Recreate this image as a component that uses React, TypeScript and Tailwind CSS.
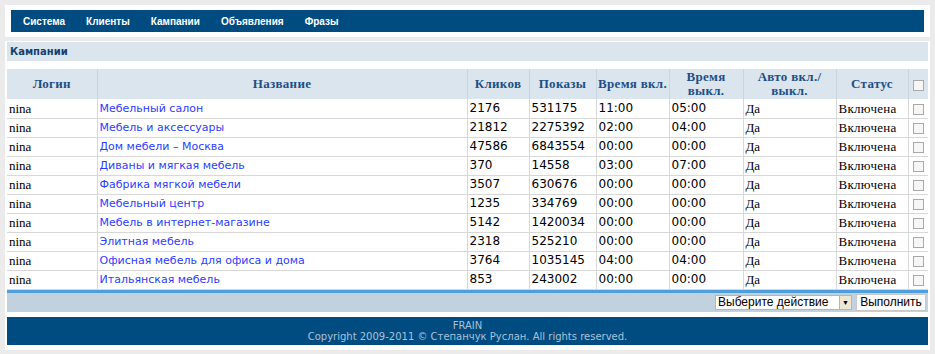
import React from "react";

const rows: [string, string, string, string, string][] = [
  ["Мебельный салон", "2176", "531175", "11:00", "05:00"],
  ["Мебель и аксессуары", "21812", "2275392", "02:00", "04:00"],
  ["Дом мебели – Москва", "47586", "6843554", "00:00", "00:00"],
  ["Диваны и мягкая мебель", "370", "14558", "03:00", "07:00"],
  ["Фабрика мягкой мебели", "3507", "630676", "00:00", "00:00"],
  ["Мебельный центр", "1235", "334769", "00:00", "00:00"],
  ["Мебель в интернет-магазине", "5142", "1420034", "00:00", "00:00"],
  ["Элитная мебель", "2318", "525210", "00:00", "00:00"],
  ["Офисная мебель для офиса и дома", "3764", "1035145", "04:00", "04:00"],
  ["Итальянская мебель", "853", "243002", "00:00", "00:00"],
];

const serif = "font-[family-name:Liberation_Serif,serif]";
const sans = "font-[family-name:DejaVu_Sans,sans-serif]";
const arial = "font-[family-name:Liberation_Sans,sans-serif]";

function Box() {
  return <span className="inline-block w-[11px] h-[11px] border border-[#a9a9a9] bg-[#f6f6f6] align-middle" />;
}

export default function App() {
  const th = `border-l border-[#c9d6e2] text-center font-bold text-[13px] leading-[14px] text-[#1d4f86] tracking-[0.3px] ${serif}`;
  const td = "border-l border-b border-[#d8d8d8] px-[2px] py-0 h-[19px] leading-[17px] whitespace-nowrap overflow-hidden";
  return (
    <div className="w-[935px] h-[354px] bg-[#ebebeb] pt-[5px] px-[5px]">
      <div className="bg-white px-[6px] py-[5px]">
        <div className={`h-[22px] bg-[#004b80] flex items-center gap-[21px] pl-[12px] text-white font-bold text-[10px] ${arial}`}>
          <span>Система</span>
          <span>Клиенты</span>
          <span>Кампании</span>
          <span>Объявления</span>
          <span>Фразы</span>
        </div>
      </div>
      <div className="mt-[4px] bg-white px-[2px] pt-[1px] pb-[5px]">
        <div className={`h-[19px] bg-[#dbe5ee] flex items-center pl-[3px] text-[10px] font-bold text-[#14406e] ${sans}`}>Кампании</div>
        <div className="h-[8px]" />
        <table className="w-full border-collapse table-fixed">
          <colgroup>
            <col className="w-[90px]" />
            <col className="w-[370px]" />
            <col className="w-[62px]" />
            <col className="w-[67px]" />
            <col className="w-[73px]" />
            <col className="w-[74px]" />
            <col className="w-[93px]" />
            <col className="w-[72px]" />
            <col className="w-[20px]" />
          </colgroup>
          <thead>
            <tr className="h-[30px] bg-[#dbe5ee]">
              <th className={`${th} border-l-0`}>Логин</th>
              <th className={th}>Название</th>
              <th className={th}>Кликов</th>
              <th className={th}>Показы</th>
              <th className={th}>Время вкл.</th>
              <th className={th}>Время<br />выкл.</th>
              <th className={th}>Авто вкл./<br />выкл.</th>
              <th className={th}>Статус</th>
              <th className={th}><Box /></th>
            </tr>
          </thead>
          <tbody className="text-[13px] text-black">
            {rows.map((r) => (
              <tr key={r[0]}>
                <td className={`${td} border-l-0 ${serif}`}>nina</td>
                <td className={`${td} text-[11px] text-[#2b3dff] ${sans}`}>{r[0]}</td>
                <td className={`${td} text-[12px] ${sans}`}>{r[1]}</td>
                <td className={`${td} text-[12px] ${sans}`}>{r[2]}</td>
                <td className={`${td} text-[12px] ${sans}`}>{r[3]}</td>
                <td className={`${td} text-[12px] ${sans}`}>{r[4]}</td>
                <td className={`${td} ${serif}`}>Да</td>
                <td className={`${td} tracking-[0.3px] ${serif}`}>Включена</td>
                <td className={`${td} text-center`}><Box /></td>
              </tr>
            ))}
          </tbody>
        </table>
        <div className="h-[3px] bg-[#4d9fdf]" />
        <div className={`h-[19px] bg-[#c2d1de] flex items-center justify-end gap-[4px] pr-[2px] text-[12px] ${arial}`}>
          <div className="w-[137px] h-[15px] bg-white border border-[#b5b5b5] flex items-center justify-between pl-[2px] leading-[13px]">
            <span>Выберите действие</span>
            <span className="w-[12px] h-[13px] bg-[#ece6d4] border-l border-[#b5b5b5] flex items-center justify-center text-[7px]">▼</span>
          </div>
          <div className="w-[70px] h-[17px] bg-[#fafafa] border border-[#c8c8c8] flex items-center justify-center">Выполнить</div>
        </div>
        <div className="h-[5px]" />
        <div className={`h-[28px] bg-[#004b80] flex flex-col items-center justify-center text-[10px] leading-[11px] text-[#a9c1d9] ${sans}`}>
          <span>FRAIN</span>
          <span>Copyright 2009-2011 © Степанчук Руслан. All rights reserved.</span>
        </div>
      </div>
    </div>
  );
}
